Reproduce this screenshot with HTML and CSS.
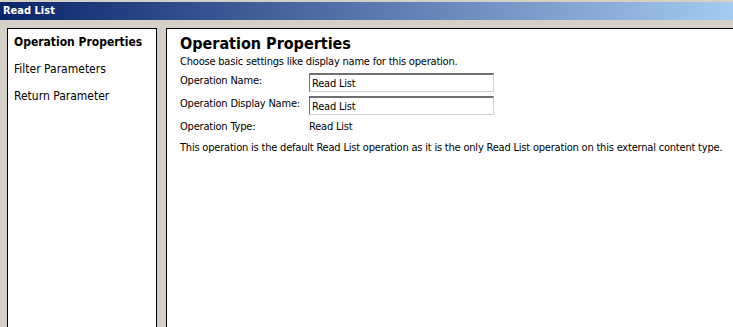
FILE: index.html
```html
<!DOCTYPE html>
<html>
<head>
  <meta charset="UTF-8">
  <title>Read List</title>
  <link rel="stylesheet" href="styles.css">
</head>
<body>
  <div class="titlebar">Read List</div>
  <div class="content">
    <ul class="side">
      <li class="current">Operation Properties</li>
      <li>Filter Parameters</li>
      <li>Return Parameter</li>
    </ul>
    <div class="main">
      <h1>Operation Properties</h1>
      <p class="intro">Choose basic settings like display name for this operation.</p>
      <div class="row">
        <label>Operation Name:</label>
        <input class="field" type="text" value="Read List">
      </div>
      <div class="row">
        <label>Operation Display Name:</label>
        <input class="field" type="text" value="Read List">
      </div>
      <div class="row">
        <label>Operation Type:</label>
        <span>Read List</span>
      </div>
      <p class="note">This operation is the default Read List operation as it is the only Read List operation on this external content type.</p>
    </div>
  </div>
</body>
</html>
```

FILE: styles.css
```css
/* Estilos de la ventana */
html, body {
  height: 100%;
}

body {
  font-family: "DejaVu Sans Condensed", "DejaVu Sans", sans-serif;
  font-size: 11px;
  color: #000;
  background-color: #d4d0c8;
  margin: 0;
  padding: 2px 0 0 0;
  box-sizing: border-box;
  display: flex;
  flex-direction: column;
  overflow: hidden;
}

.titlebar {
  height: 18px;
  line-height: 18px;
  padding-left: 3px;
  color: #fff;
  font-weight: bold;
  background: linear-gradient(to right, #0a246a, #a6caf0);
}

.content {
  flex: 1;
  display: flex;
  gap: 9px;
  padding: 8px 0 0 7px;
}

.side {
  width: 150px;
  box-sizing: border-box;
  flex-shrink: 0;
  list-style-type: none;
  margin: 0;
  padding: 2px 0 0 6px;
  background-color: #fff;
  border: 1px solid #000;
  border-bottom: none;
}

.side li {
  font-size: 12px;
  height: 27px;
  line-height: 22px;
}

.side li.current {
  font-weight: bold;
}

.main {
  flex: 1;
  background-color: #fff;
  border-top: 1px solid #000;
  border-left: 1px solid #000;
  padding: 5px 0 0 13px;
  letter-spacing: -0.2px;
}

h1 {
  font-size: 16px;
  letter-spacing: 0;
  margin: 0;
  line-height: 20px;
}

.intro {
  margin: 1px 0 1px 0;
  line-height: 13px;
}

.row {
  display: flex;
  align-items: center;
  height: 23px;
}

.row label {
  width: 129px;
}

.field {
  font-family: inherit;
  font-size: 11px;
  letter-spacing: -0.2px;
  width: 185px;
  height: 19px;
  box-sizing: border-box;
  margin: 4px 0 0 0;
  padding: 1px 2px 0 2px;
  border: 1px solid #d4d0c8;
  border-top: 2px solid #707070;
  border-left: 1px solid #707070;
  outline: none;
}

.note {
  margin: 3px 0 0 0;
  white-space: nowrap;
}
```
